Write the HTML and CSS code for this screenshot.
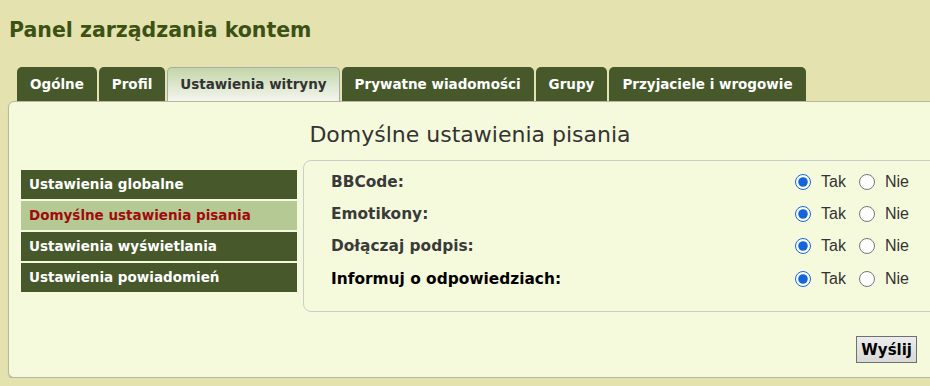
FILE: index.html
```html
<!DOCTYPE html>
<html lang="pl">
<head>
    <meta charset="UTF-8">
    <title>Panel zarządzania kontem</title>
    <link rel="stylesheet" href="styles.css">
</head>
<body>
    <h1 class="page-title">Panel zarządzania kontem</h1>
    <div class="tabs">
        <a class="tab">Ogólne</a>
        <a class="tab">Profil</a>
        <a class="tab tab-active">Ustawienia witryny</a>
        <a class="tab">Prywatne wiadomości</a>
        <a class="tab">Grupy</a>
        <a class="tab">Przyjaciele i wrogowie</a>
    </div>
    <div class="panel">
        <h2 class="panel-title">Domyślne ustawienia pisania</h2>
        <div class="panel-body">
            <ul class="side-menu">
                <li>Ustawienia globalne</li>
                <li class="current">Domyślne ustawienia pisania</li>
                <li>Ustawienia wyświetlania</li>
                <li>Ustawienia powiadomień</li>
            </ul>
            <div class="options">
                <div class="option">
                    <span class="option-label">BBCode:</span>
                    <span class="choices">
                        <label><input type="radio" name="bbcode" checked> Tak</label>
                        <label><input type="radio" name="bbcode"> Nie</label>
                    </span>
                </div>
                <div class="option">
                    <span class="option-label">Emotikony:</span>
                    <span class="choices">
                        <label><input type="radio" name="smilies" checked> Tak</label>
                        <label><input type="radio" name="smilies"> Nie</label>
                    </span>
                </div>
                <div class="option">
                    <span class="option-label">Dołączaj podpis:</span>
                    <span class="choices">
                        <label><input type="radio" name="sig" checked> Tak</label>
                        <label><input type="radio" name="sig"> Nie</label>
                    </span>
                </div>
                <div class="option">
                    <span class="option-label option-strong">Informuj o odpowiedziach:</span>
                    <span class="choices">
                        <label><input type="radio" name="notify" checked> Tak</label>
                        <label><input type="radio" name="notify"> Nie</label>
                    </span>
                </div>
            </div>
        </div>
        <div class="submit-row">
            <button class="button">Wyślij</button>
        </div>
    </div>
</body>
</html>
```

FILE: styles.css
```css
body {
    margin: 0;
    background-color: #e4e2ae;
    font-family: "DejaVu Sans", Verdana, sans-serif;
    overflow: hidden;
}
.page-title {
    margin: 0;
    padding: 17px 0 0 9px;
    font-size: 20.5px;
    color: #3b5214;
    line-height: 26px;
}
.tabs {
    display: flex;
    gap: 2px;
    padding: 24px 0 0 17px;
}
.tab {
    background-color: #47592a;
    color: #fff;
    font-weight: bold;
    font-size: 13.5px;
    padding: 0 13px;
    height: 34px;
    line-height: 34px;
    border-radius: 5px 5px 0 0;
    box-sizing: border-box;
    white-space: nowrap;
}
.tab-active {
    background: linear-gradient(#c3d6a9, #f4f5ee);
    color: #333;
    border: 1px solid #aaa;
    border-bottom: none;
    line-height: 32px;
    padding: 0 12px;
}
.panel {
    margin-left: 8px;
    margin-right: -20px;
    background-color: #f6fadc;
    border: 1px solid #b8b8a0;
    border-radius: 6px 6px 0 6px;
    box-shadow: 1px 2px 2px rgba(0, 0, 0, 0.3);
    height: 277px;
    box-sizing: border-box;
}
.panel-title {
    margin: 0;
    padding: 19px 0 0 0;
    text-align: center;
    font-size: 22px;
    font-weight: normal;
    color: #333;
    line-height: 27px;
    width: 922px;
}
.panel-body {
    display: flex;
    margin-top: 12px;
    padding-left: 12px;
    gap: 6px;
}
.side-menu {
    list-style: none;
    margin: 10px 0 0 0;
    padding: 0;
    width: 276px;
    display: flex;
    flex-direction: column;
    gap: 2px;
}
.side-menu li {
    background-color: #47592a;
    color: #fff;
    font-weight: bold;
    font-size: 13.5px;
    height: 29px;
    line-height: 29px;
    padding-left: 8px;
    white-space: nowrap;
}
.side-menu li.current {
    background-color: #b5c995;
    color: #a00a0a;
}
.options {
    flex: 1;
    border: 1px solid #ccc;
    border-radius: 8px 0 0 8px;
    padding: 5px 0 12px 27px;
    height: 152px;
    box-sizing: border-box;
}
.option {
    display: flex;
    align-items: center;
    height: 32px;
}
.option:last-child {
    height: 34px;
}
.option-label {
    flex: 1;
    font-weight: bold;
    font-size: 15.4px;
    color: #3a3a3a;
}
.option-strong {
    color: #000;
}
.choices {
    display: flex;
    gap: 13px;
    width: 153px;
    font-family: "Liberation Sans", Arial, sans-serif;
    font-size: 16px;
    color: #333;
}
.choices label {
    display: flex;
    align-items: center;
    gap: 10px;
}
.choices input {
    margin: 0;
    width: 16px;
    height: 16px;
    accent-color: #1565d8;
}
.submit-row {
    display: flex;
    justify-content: flex-end;
    padding: 24px 14px 0 0;
    width: 908px;
}
.button {
    font-family: "DejaVu Sans", Verdana, sans-serif;
    font-weight: bold;
    font-size: 15px;
    color: #000;
    background: linear-gradient(#ececec, #d8d8d8);
    border: 1px solid #707070;
    padding: 2px 4px;
    height: 27px;
}
```
